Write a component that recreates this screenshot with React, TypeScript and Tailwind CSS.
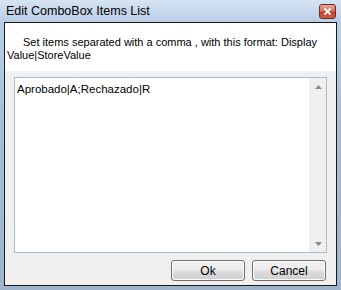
import React from "react";

const font = { fontFamily: '"Liberation Sans", Arial, sans-serif' };

function WinButton({ label }: { label: string }) {
  return (
    <button
      type="button"
      className="h-[21px] w-[74px] rounded-[3px] border border-[#707070] bg-[linear-gradient(#f2f2f2_0%,#ebebeb_48%,#dddddd_52%,#cfcfcf_100%)] text-[12px] leading-none text-black shadow-[inset_0_0_0_1px_#fcfcfc]"
    >
      {label}
    </button>
  );
}

function ScrollArrow({ up }: { up?: boolean }) {
  return (
    <div className="flex h-[17px] items-center justify-center">
      <svg width="7" height="4" viewBox="0 0 7 4">
        {up ? (
          <polygon points="0,4 7,4 3.5,0" fill="#8a8a8a" />
        ) : (
          <polygon points="0,0 7,0 3.5,4" fill="#8a8a8a" />
        )}
      </svg>
    </div>
  );
}

export default function App() {
  return (
    <div
      className="flex h-[290px] w-[341px] flex-col bg-[linear-gradient(180deg,#d6e4f3_0px,#b9cde6_22px,#a9bfd8_120px,#9fb4cc_290px)] px-[4px] pb-[4px]"
      style={font}
    >
      {/* title bar */}
      <div className="flex h-[22px] items-center pl-[2px] pr-[1px]">
        <span className="text-[12.5px] text-black">Edit ComboBox Items List</span>
        <div className="ml-auto flex h-[15px] w-[17px] items-center justify-center rounded-[3px] border border-[#6b2a22] bg-[linear-gradient(#e9a99d_0%,#d7725f_45%,#c2412a_55%,#d45c40_100%)]">
          <svg width="7" height="7" viewBox="0 0 7 7">
            <path d="M1 1 L6 6 M6 1 L1 6" stroke="#fff" strokeWidth="1.8" strokeLinecap="square" />
          </svg>
        </div>
      </div>

      {/* client area */}
      <div className="flex flex-1 flex-col border border-[#1a1a1a] bg-[#f0f0f0]">
        <div className="h-[48px] whitespace-nowrap bg-white px-[2px] pt-[13px] text-[11px] leading-[13px] text-black">
          <span className="pl-[16px]">Set items separated with a comma , with this format: Display</span>
          <br />
          Value|StoreValue
        </div>

        <div className="flex flex-1 flex-col px-[9px] pt-[6px]">
          <div className="flex h-[176px] border border-[#a6bdd2] bg-white">
            <div className="flex-1 px-[2px] pt-[4px] text-[11.5px] leading-[14px] text-black">
              Aprobado|A;Rechazado|R
            </div>
            <div className="flex w-[17px] flex-col justify-between border-l border-[#f0f0f0] bg-[#f0f0f0]">
              <ScrollArrow up />
              <ScrollArrow />
            </div>
          </div>

          <div className="flex justify-end gap-[7px] pt-[7px] pr-[1px]">
            <WinButton label="Ok" />
            <WinButton label="Cancel" />
          </div>
        </div>
      </div>
    </div>
  );
}
